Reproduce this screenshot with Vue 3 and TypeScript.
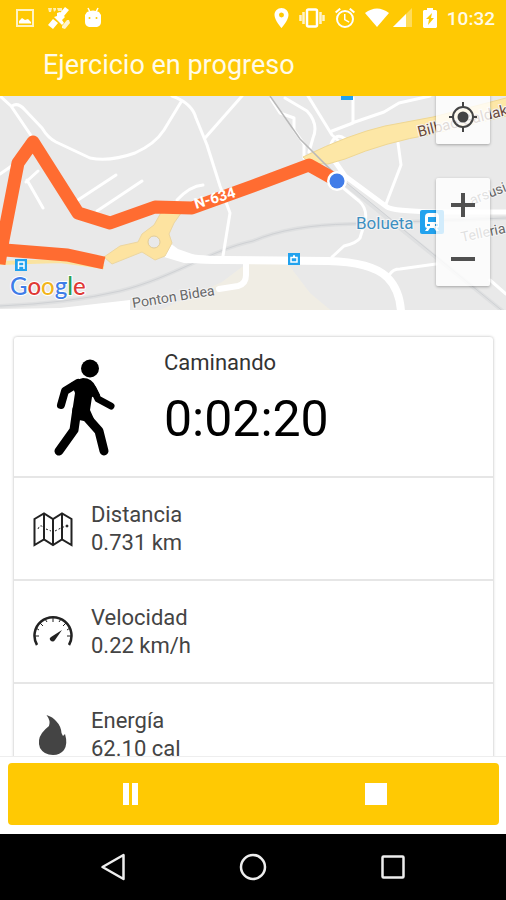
<script setup lang="ts">
import { ref } from 'vue'

type IconName = 'map' | 'gauge' | 'flame'

interface Stat {
  icon: IconName
  label: string
  value: string
}

const activity = ref('Caminando')
const elapsed = ref('0:02:20')
const stats = ref<Stat[]>([
  { icon: 'map', label: 'Distancia', value: '0.731 km' },
  { icon: 'gauge', label: 'Velocidad', value: '0.22 km/h' },
  { icon: 'flame', label: 'Energía', value: '62.10 cal' },
])
</script>

<template>
  <div class="screen">
    <header class="top">
      <div class="status">
        <div class="notices">
          <svg width="18" height="18" viewBox="0 0 18 18" aria-hidden="true">
            <rect x="1" y="1" width="16" height="16" fill="none" stroke="#fff3c4" stroke-width="2" />
            <path d="M3 14.500V12l3-3 3 2 3-1 3 3v1.500z" fill="#fff" />
          </svg>
          <svg width="24" height="24" viewBox="0 0 24 24" aria-hidden="true">
            <g fill="#fff">
              <path d="M1 2h4l-1 4H2zM6 2h3v2L7 6zM10 2h5v3h-4z" opacity=".7" />
              <path d="M18 1l4 3-5 6-4-3zM10 7l3-1 5 5-3 3 2 3-2 2-8-8 3-1zM6 13l5 4-5 6-5-4z" />
              <path d="M22 14l1 3-5 6-3-1v-2l5-6z" opacity=".8" />
            </g>
          </svg>
          <svg width="18" height="22" viewBox="0 0 18 22" aria-hidden="true">
            <path d="M4 1l2 4M14 1l-2 4" stroke="#fff" stroke-width="1.500" />
            <path d="M3 5q6-3 12 0l2 3v7q0 4-4 5H5q-4-1-4-5V8z" fill="#fff" />
            <circle cx="5.500" cy="11" r="1" fill="#fc0" />
            <circle cx="12.500" cy="11" r="1" fill="#fc0" />
          </svg>
        </div>
        <div class="system">
          <svg class="pin" width="15" height="20" viewBox="5 2 14 20" aria-hidden="true">
            <path fill="#fff" d="M12 2C8.130 2 5 5.130 5 9c0 5.250 7 13 7 13s7-7.750 7-13c0-3.870-3.130-7-7-7zm0 9.500a2.500 2.500 0 0 1 0-5 2.500 2.500 0 0 1 0 5z" />
          </svg>
          <svg class="vibrate" width="26" height="20" viewBox="0 0 26 20" aria-hidden="true">
            <rect x="8" y="1.500" width="10" height="17" rx="1.500" fill="none" stroke="#fff" stroke-width="2.500" />
            <path d="M4.500 4v12M1.500 7v6M21.500 4v12M24.500 7v6" stroke="#fff" stroke-width="2.500" opacity=".8" />
          </svg>
          <svg class="alarm" width="20" height="20" viewBox="2 2 20 20" aria-hidden="true">
            <path fill="#fff" d="M22 5.720l-4.600-3.860-1.290 1.530 4.600 3.860L22 5.720zM7.880 3.390L6.600 1.860 2 5.710l1.290 1.530 4.590-3.850zM12.500 8H11v6l4.750 2.850.75-1.230-4-2.370V8zM12 4a9 9 0 1 0 0 18 9 9 0 0 0 0-18zm0 16a7 7 0 1 1 0-14 7 7 0 0 1 0 14z" />
          </svg>
          <svg class="wifi" width="26" height="20" viewBox="0 0 26 20" aria-hidden="true">
            <path fill="#fff" d="M12 19L0 5Q12-4 24 5z" />
          </svg>
          <svg class="signal" width="20" height="20" viewBox="0 0 20 20" aria-hidden="true">
            <path fill="#fff" opacity=".35" d="M19 0v19H0z" />
            <path fill="#fff" d="M13 6v13H0z" />
          </svg>
          <svg class="battery" width="14" height="20" viewBox="0 0 14 20" aria-hidden="true">
            <path fill="#fff" d="M4 0h6v2h3l1 1v16l-1 1H1l-1-1V3l1-1h3z" />
            <path fill="#fc0" d="M9 5l-6 6h3l-1 6 6-7H8z" />
          </svg>
          <time class="clock">10:32</time>
        </div>
      </div>
      <h1 class="title">Ejercicio en progreso</h1>
    </header>

    <section class="map" aria-label="Mapa">
      <svg class="tiles" viewBox="0 96 506 214" preserveAspectRatio="xMidYMid slice">
        <rect y="90" width="506" height="225" fill="#e9e9e9" />
        <path fill="#f0ede4" d="M160 310l62-28 24-18h42l22 29 24 20z" />
        <path fill="#fff" d="M0 309L60 308L130 300V312H0z" />
        <g fill="none" stroke="#dfe0e1" stroke-width="4">
          <path d="M0 306Q70 303 120 291C175 277 210 250 253 241Q290 225 350 224L506 218" />
          <path d="M345 184L505 313" />
        </g>
        <g fill="none" stroke="#cfd1d4" stroke-width="1">
          <path d="M0 306Q70 303 120 291C175 277 210 250 253 241Q290 225 350 224L506 218" />
          <path d="M337 175L505 313" />
        </g>
        <g fill="none" stroke="#fff" stroke-linejoin="round" stroke-linecap="round">
          <g stroke-width="3">
            <path d="M0 96L11 106L32 137" />
            <path d="M12 106Q18 102 25 110L42 128Q48 138 56 142L90 158Q110 162 135 153Q155 144 164 130L181 102" />
            <path d="M172 96Q192 103 196 118L207 145L220 186L230 213L223 256" />
            <path d="M242 96L205 138" />
            <path d="M0 174L13 165M26 182L38 171M27 180L43 208" />
            <path d="M78 200L116 175M97 211L142 181M177 200Q190 186 203 185" />
            <path d="M271 99L280 113L294 118V130L304 144V158" />
            <path d="M285 98L307 111Q319 124 313 138L309 152" />
            <path d="M308 96L332 135L341 143M353 98V123L332 131M352 123L384 112L399 103L430 96" />
            <path d="M331 144Q335 134 342 137L349 141" />
            <path d="M398 143L401 165L386 204" />
            <path d="M336 182L359 201Q368 209 365 222L360 238Q357 243 344 246L332 257" />
            <path d="M390 274Q393 269 400 269L436 264M490 280L506 294" />
          </g>
          <path d="M334 160L345 176L387 207Q392 211 436 212H506" stroke-width="5" />
          <path d="M180 257Q200 260 225 260L328 261Q371 262 387 277Q400 290 401 312" stroke-width="8" />
          <path d="M246 264V275Q246 284 238 286L219 289" stroke-width="6" />
        </g>
        <path d="M170 243L178 249L195 255L222 257V264L184 263L164 257z" fill="#fff" />
        <path d="M0 263L60 261L104 267" fill="none" stroke="#fae3a0" stroke-width="4" />
        <path d="M303 157Q350 134 385 126L433 117L510 97V115L433 134Q385 142 345 159L328 164L310 163z" fill="#fde7a6" stroke="#efd793" stroke-width="1" />
        <path d="M104 257L120 246L138 242L142 234L154 225L163 209H184L174 223L169 234L172 243L165 256L155 260L142 252L112 264z" fill="#fde3a0" stroke="#ecd6a0" stroke-width="1" />
        <circle cx="154" cy="242" r="6" fill="#e9e9e9" stroke="#e2cc98" />
        <path d="M270 96L300 139L337 176" fill="none" stroke="#b9b9b9" stroke-width="1.500" />

        <g fill="none" stroke="#ff6c31" stroke-width="13">
          <path d="M104 263L67 255L5 250" />
          <path d="M-1 264L3 240L18 163L33 142L78 213L110 223L155 207L192 208L253 186L309 165L334 179" stroke-linejoin="round" />
        </g>
        <circle cx="337" cy="181" r="10" fill="#fff" />
        <circle cx="337" cy="181" r="7.500" fill="#427de8" />

        <g fill="#22a2ee">
          <rect x="15" y="259" width="12" height="12" />
          <rect x="288" y="253" width="12" height="12" />
          <rect x="341" y="88" width="12" height="12" />
          <rect x="420" y="210" width="24" height="24" rx="2" />
        </g>
        <g fill="none" stroke="#fff" stroke-width="1.500">
          <path d="M18.500 269V262H24V269M18.500 266H24" />
          <path d="M291 257.500H297V262H291zM293 256H295" />
        </g>
        <path fill="#fff" fill-rule="evenodd" d="M425 226V217Q425 213 429 213H436Q439 213 439 217V226Q439 228 437 228L439 231H436L434 228H430L428 231H425L427 228Q425 228 425 226zM428 217V222H436V217zM427 224V226H430V224zM435 224V226H438V224z" />

        <g class="labels">
          <text x="356" y="229" font-size="17" fill="#3d8fc1">Bolueta</text>
          <text transform="translate(419 137) rotate(-14)" font-size="15" fill="#6b4a3a">Bilbao-Galdakao</text>
          <text transform="translate(133 308) rotate(-9)" font-size="14" fill="#666">Ponton Bidea</text>
          <text transform="translate(465 208) rotate(-22)" font-size="14" fill="#666">Larsusi</text>
          <text transform="translate(462 242) rotate(-12)" font-size="14" fill="#666">Telleria</text>
        </g>
        <text class="road" transform="translate(196 209) rotate(-17)">N-634</text>
        <text class="brand" x="10" y="295">
          <tspan fill="#3f7de8">G</tspan><tspan fill="#df3a35">o</tspan><tspan fill="#f2b51c">o</tspan><tspan fill="#3f7de8">g</tspan><tspan fill="#2e9f50">l</tspan><tspan fill="#df3a35">e</tspan>
        </text>
      </svg>

      <div class="controls">
        <button class="control" type="button" aria-label="Mi ubicación">
          <svg width="28" height="30" viewBox="0 0 28 30" aria-hidden="true">
            <circle cx="14" cy="15" r="5.500" fill="#444" />
            <circle cx="14" cy="15" r="10" fill="none" stroke="#444" stroke-width="2" />
            <path d="M14 0v6M14 24v6M0 15h5M23 15h5" stroke="#444" stroke-width="2" />
          </svg>
        </button>
        <div class="zoom">
          <button class="control" type="button" aria-label="Acercar">
            <svg width="24" height="24" viewBox="0 0 24 24" aria-hidden="true">
              <path d="M12 0v24M0 12h24" stroke="#505050" stroke-width="4" />
            </svg>
          </button>
          <button class="control" type="button" aria-label="Alejar">
            <svg width="24" height="24" viewBox="0 0 24 24" aria-hidden="true">
              <path d="M0 12h24" stroke="#505050" stroke-width="4" />
            </svg>
          </button>
        </div>
      </div>
    </section>

    <main class="content">
      <div class="card">
        <section class="summary">
          <svg class="walker" width="62" height="98" viewBox="0 0 62 98" aria-hidden="true">
            <circle cx="36" cy="9.500" r="9" />
            <path d="M17 24Q23 20 29 19Q38 19 42 28L46 36L38 38L36 51L40 60L30 62L20 60L18 54L21 34z" />
            <g fill="none" stroke="#000" stroke-linecap="round" stroke-linejoin="round">
              <path d="M24 24L11 32L7 46" stroke-width="8" />
              <path d="M39 30L44 40L57 47" stroke-width="7" />
              <path d="M23 50L20 71L5 92" stroke-width="9" />
              <path d="M29 54L45 72L50 92" stroke-width="9" />
            </g>
          </svg>
          <div>
            <h2 class="activity">{{ activity }}</h2>
            <p class="elapsed">{{ elapsed }}</p>
          </div>
        </section>

        <section v-for="stat in stats" :key="stat.label" class="stat">
          <svg v-if="stat.icon === 'map'" class="icon" viewBox="0 0 40 40" fill="none" stroke="#222" aria-hidden="true">
            <path d="M1.500 10L11 4.500L20 10L29 4.500L38.500 10V36L29 30.500L20 36L11 30.500L1.500 36z" stroke-width="2" />
            <path d="M11 4.500V30.500M20 10V36M29 4.500V30.500" stroke-width="2" />
            <path d="M5 20Q7 15 10 18M13 20L18 22M22 22L28 19L33 17" stroke-width="1" stroke-dasharray="2 2" />
            <circle cx="34" cy="17" r="1" fill="#222" />
          </svg>
          <svg v-else-if="stat.icon === 'gauge'" class="icon" viewBox="0 0 40 40" fill="none" stroke="#222" aria-hidden="true">
            <path d="M4 33A18.500 18.500 0 1 1 36 33" stroke-width="2.500" />
            <path d="M2 24H6M34 24H38M7 11L10 14M33 11L30 14M20 6V10M12 7L14 10M28 7L26 10M3 16L6 18M37 16L34 18" stroke-width="1" />
            <path d="M29 18L22 28Q20 31 17 28Q16 26 18 25z" fill="#222" stroke="none" />
          </svg>
          <svg v-else class="icon" viewBox="0 0 40 40" aria-hidden="true">
            <path fill="#444" d="M13.500 0Q20 2 23 6Q28 11 28.500 18L30 21L32 19Q35 29 31 35Q27 40 20 40Q11 40 7 33Q4 25 9 18Q12 14 16 11Q18 6 13.500 0z" />
          </svg>
          <dl class="reading">
            <dt>{{ stat.label }}</dt>
            <dd>{{ stat.value }}</dd>
          </dl>
        </section>
      </div>
    </main>

    <footer class="actions">
      <div class="bar">
        <button class="action" type="button" aria-label="Pausar">
          <svg width="22" height="22" viewBox="0 0 22 22" aria-hidden="true">
            <path fill="#fff" d="M3 0h6v22H3zM12 0h6v22h-6z" />
          </svg>
        </button>
        <button class="action" type="button" aria-label="Detener">
          <svg width="22" height="22" viewBox="0 0 22 22" aria-hidden="true">
            <path fill="#fff" d="M0 0h22v22H0z" />
          </svg>
        </button>
      </div>
    </footer>

    <nav class="system-nav" aria-label="Sistema">
      <button type="button" aria-label="Atrás">
        <svg width="28" height="28" viewBox="0 0 28 28" fill="none" stroke="#eee" stroke-width="2.500" stroke-linejoin="round" aria-hidden="true">
          <path d="M24.500 2V26L3.500 14z" />
        </svg>
      </button>
      <button type="button" aria-label="Inicio">
        <svg width="28" height="28" viewBox="0 0 28 28" fill="none" stroke="#eee" stroke-width="2.500" aria-hidden="true">
          <circle cx="14" cy="14" r="12" />
        </svg>
      </button>
      <button type="button" aria-label="Recientes">
        <svg width="28" height="28" viewBox="0 0 28 28" fill="none" stroke="#eee" stroke-width="2.500" aria-hidden="true">
          <rect x="3.500" y="3.500" width="21" height="21" rx="1" />
        </svg>
      </button>
    </nav>
  </div>
</template>

<style>
body {
  margin: 0;
}
</style>

<style scoped>
.screen {
  display: flex;
  flex-direction: column;
  height: 100vh;
  overflow: hidden;
  background: #fff;
  font-family: Roboto, "Liberation Sans", sans-serif;
  color: #000;
}

svg {
  display: block;
  flex: none;
}

button {
  display: flex;
  align-items: center;
  justify-content: center;
  padding: 0;
  border: 0;
  background: none;
  cursor: pointer;
}

.top {
  position: relative;
  z-index: 1;
  flex: none;
  background: #ffc903;
  color: #fffbe8;
}

.status {
  display: flex;
  align-items: center;
  justify-content: space-between;
  height: 36px;
  padding: 0 11px 0 16px;
}

.notices,
.system {
  display: flex;
  align-items: center;
}

.notices {
  gap: 13px;
}

.system {
  gap: 10px;
}

.signal {
  margin-left: -8px;
}

.clock {
  font-size: 19px;
  font-weight: 500;
}

.title {
  margin: 0;
  padding: 13px 43px 15px;
  font-size: 27px;
  font-weight: 400;
  line-height: 32px;
}

.map {
  position: relative;
  flex: none;
  height: 214px;
}

.tiles {
  width: 100%;
  height: 100%;
}

.labels text {
  paint-order: stroke;
  stroke: #f4f4f4;
  stroke-width: 2px;
}

.road {
  font-size: 15px;
  font-weight: 700;
  fill: #fff;
}

.brand {
  font-family: Lato, "Open Sans", sans-serif;
  font-size: 24px;
  font-weight: 500;
  paint-order: stroke;
  stroke: #fff;
  stroke-width: 2px;
}

.controls {
  position: absolute;
  top: -6px;
  right: 16px;
  display: flex;
  flex-direction: column;
  gap: 34px;
}

.control {
  width: 54px;
  height: 54px;
}

.controls > .control,
.zoom {
  border-radius: 2px;
  background: rgba(255, 255, 255, 0.8);
  box-shadow: 0 1px 3px rgba(0, 0, 0, 0.3);
}

.content {
  flex: 1;
  min-height: 0;
  overflow-y: auto;
  scrollbar-width: none;
  padding: 27px 13px 0 14px;
}

.card {
  border-radius: 3px;
  box-shadow: 0 0 3px rgba(0, 0, 0, 0.3);
}

.summary {
  display: flex;
  gap: 48px;
  height: 139px;
  padding: 0 40px;
}

.walker {
  margin-top: 22px;
}

.activity {
  margin: 11px 0 0;
  font-size: 22px;
  font-weight: 400;
  line-height: 30px;
  color: #333;
}

.elapsed {
  margin: 11px 0 0;
  font-size: 50px;
  line-height: 60px;
}

.stat {
  display: flex;
  align-items: center;
  gap: 18px;
  height: 101px;
  padding: 0 19px;
  border-top: 2px solid #e6e6e6;
}

.icon {
  width: 40px;
  height: 40px;
}

.reading {
  margin: 0;
  font-size: 22px;
  line-height: 28px;
  color: #444;
}

.reading dd {
  margin: 0;
}

.actions {
  position: relative;
  flex: none;
  padding: 6px 7px 9px 8px;
  border-top: 1px solid #eee;
  background: #fff;
}

.bar {
  display: flex;
  border-radius: 4px;
  background: #ffc903;
}

.action {
  flex: 1;
  height: 62px;
}

.system-nav {
  display: flex;
  justify-content: center;
  flex: none;
  height: 66px;
  background: #000;
}

.system-nav button {
  width: 140px;
}
</style>
